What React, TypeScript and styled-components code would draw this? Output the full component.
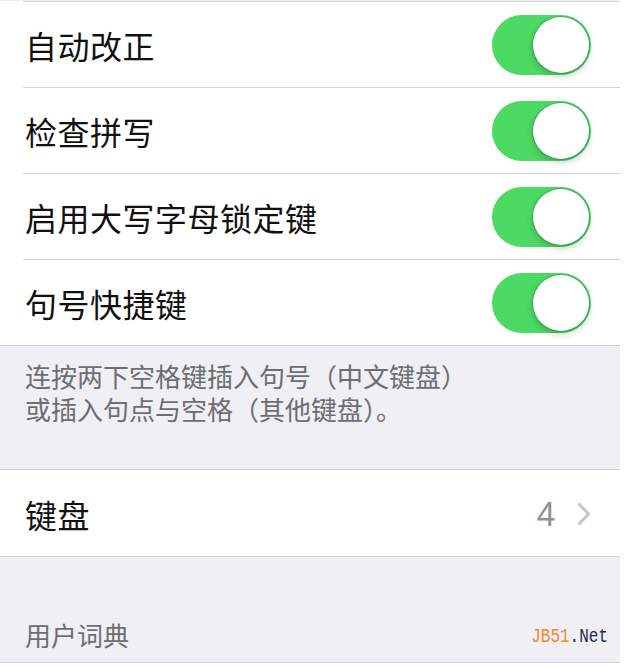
import React from "react";
import styled, { createGlobalStyle } from "styled-components";

const GlobalStyle = createGlobalStyle`
  html, body {
    margin: 0;
    padding: 0;
    background: #ffffff;
  }
  body {
    font-family: "Noto Sans CJK SC", "Noto Sans", sans-serif;
  }
`;

type Setting = { title: string; on: boolean };

const toggles: Setting[] = [
  { title: "自动改正", on: true },
  { title: "检查拼写", on: true },
  { title: "启用大写字母锁定键", on: true },
  { title: "句号快捷键", on: true },
];

function Toggle({ on }: { on: boolean }) {
  return (
    <Track $on={on}>
      <Knob $on={on} />
    </Track>
  );
}

function Chevron() {
  return (
    <svg width="14" height="24" viewBox="0 0 14 24">
      <path
        d="M2.5 2.5 L11.5 12 L2.5 21.5"
        fill="none"
        stroke="#c7c7cc"
        strokeWidth="3.2"
        strokeLinecap="round"
        strokeLinejoin="round"
      />
    </svg>
  );
}

export default function App() {
  return (
    <>
      <GlobalStyle />
      <Screen>
        <Group>
          {toggles.map((t) => (
            <Row key={t.title} $inset>
              <RowTitle>{t.title}</RowTitle>
              <Toggle on={t.on} />
            </Row>
          ))}
        </Group>
        <Footer>
          <FooterLine>连按两下空格键插入句号（中文键盘）</FooterLine>
          <FooterLine>或插入句点与空格（其他键盘）。</FooterLine>
        </Footer>
        <Group>
          <Row>
            <RowTitle>键盘</RowTitle>
            <Detail>
              <Count>4</Count>
              <Chevron />
            </Detail>
          </Row>
        </Group>
        <SectionHeader>
          <span>用户词典</span>
          <Mark>
            <MarkBrand>JB51</MarkBrand>.Net
          </Mark>
        </SectionHeader>
      </Screen>
    </>
  );
}

const Screen = styled.div`
  width: 620px;
  background: #efeff4;
  padding-top: 1px;
  border-bottom: 1px solid #d6d6da;
`;

const Group = styled.div`
  background: #ffffff;
  border-bottom: 1px solid #d0d0d4;
`;

const Row = styled.div<{ $inset?: boolean }>`
  position: relative;
  height: 85px;
  display: flex;
  align-items: center;
  justify-content: space-between;
  padding: 0 29px 0 25px;
  border-top: 1px solid ${(p) => (p.$inset ? "transparent" : "#ffffff")};

  &::before {
    content: "";
    display: ${(p) => (p.$inset ? "block" : "none")};
    position: absolute;
    top: -1px;
    left: 23px;
    right: 0;
    height: 1px;
    background: #d4d4d8;
  }
`;

const RowTitle = styled.div`
  font-size: 32px;
  line-height: 40px;
  color: #111111;
  letter-spacing: 0.5px;
`;

const Track = styled.div<{ $on: boolean }>`
  position: relative;
  width: 99px;
  height: 60px;
  border-radius: 30px;
  background: ${(p) => (p.$on ? "#4cd964" : "#e5e5ea")};
  flex-shrink: 0;
`;

const Knob = styled.div<{ $on: boolean }>`
  position: absolute;
  top: 2px;
  left: ${(p) => (p.$on ? "41px" : "2px")};
  width: 56px;
  height: 56px;
  border-radius: 50%;
  background: #ffffff;
  box-shadow: 0 3px 7px rgba(0, 0, 0, 0.22), 0 0 0 1px rgba(40, 140, 60, 0.35);
`;

const Footer = styled.div`
  padding: 13px 25px 44px;
  color: #6d6d72;
  border-bottom: 1px solid #d0d0d4;
`;

const FooterLine = styled.div`
  font-size: 26px;
  line-height: 33px;
  height: 33px;
`;

const Detail = styled.div`
  display: flex;
  align-items: center;
  gap: 22px;
`;

const Count = styled.span`
  font-family: "Noto Sans", "Liberation Sans", sans-serif;
  font-size: 32px;
  line-height: 40px;
  color: #8e8e93;
`;

const SectionHeader = styled.div`
  height: 105px;
  box-sizing: border-box;
  display: flex;
  align-items: flex-end;
  justify-content: space-between;
  padding: 0 12px 11px 25px;
  font-size: 26px;
  line-height: 33px;
  color: #6d6d72;
`;

const Mark = styled.span`
  font-family: "Liberation Mono", monospace;
  font-size: 16px;
  line-height: 24px;
  color: #1c2a48;
  display: inline-block;
  transform: scaleY(1.25);
  margin-bottom: 2px;
`;

const MarkBrand = styled.span`
  color: #f08a2a;
`;
